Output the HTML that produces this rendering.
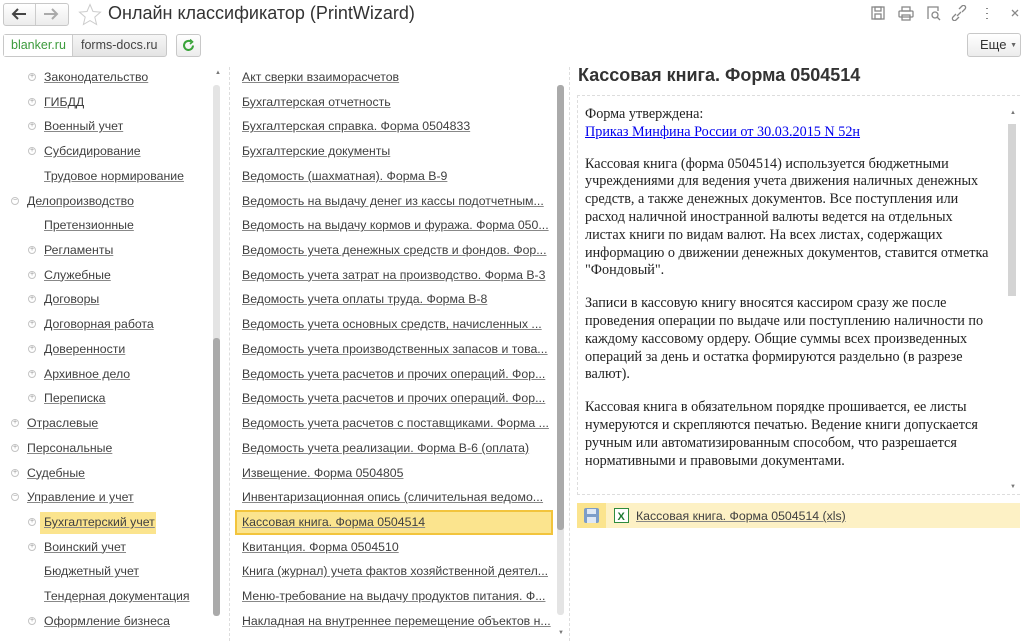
<!DOCTYPE html>
<html><head><meta charset="utf-8"><style>
*{margin:0;padding:0;box-sizing:border-box}
body{width:1024px;height:641px;background:#fff;font-family:"Liberation Sans",Arial,sans-serif;color:#333;position:relative;overflow:hidden}
.a{position:absolute}
.t{position:absolute;font-size:12.3px;white-space:nowrap;text-decoration:underline;text-decoration-color:#888;color:#404040;line-height:16px}
.pl{position:absolute;width:8px;height:8px;border:1px solid #c4c4c4;border-radius:50%;font-size:7px;line-height:6px;text-align:center;color:#999}
.btn{position:absolute;border:1px solid #c8c8c8;border-radius:3px;background:linear-gradient(#fff,#ececec)}
.p{margin-bottom:15px}
</style></head><body>
<div class="btn" style="left:3px;top:3px;width:66px;height:23px"></div>
<div class="a" style="left:35px;top:4px;width:1px;height:21px;background:#ccc"></div>
<svg class="a" style="left:11px;top:8px" width="56" height="12" fill="none" stroke-width="2"><path d="M2 6h13M7 1L2 6l5 5" stroke="#444"/><path d="M33 6h13M41 1l5 5-5 5" stroke="#aaa"/></svg>
<svg class="a" style="left:78px;top:3px" width="24" height="23"><path d="M12 1.5l3 7 7.5.6-5.7 5 1.8 7.4L12 17.6l-6.6 3.9 1.8-7.4-5.7-5 7.5-.6z" fill="none" stroke="#ccc"/></svg>
<div class="a" style="left:108px;top:3px;font-size:18px;color:#333">Онлайн классификатор (PrintWizard)</div>
<svg class="a" style="left:870px;top:5px" width="150" height="16" fill="none" stroke="#888" stroke-width="1.3">
<rect x="2" y="2" width="12" height="12"/><rect x="5" y="9" width="6" height="5"/><rect x="5" y="2" width="6" height="4"/>
<rect x="29" y="6" width="14" height="6" rx="1"/><rect x="32" y="2" width="8" height="4"/><rect x="32" y="10" width="8" height="5"/>
<path d="M58 14V2h10v4"/><circle cx="65" cy="10" r="3"/><path d="M67 12l3 3"/>
<path d="M86 9l-3 3a2 2 0 0 0 3 3l3-3M92 7l3-3a2 2 0 0 0-3-3l-3 3M87 11l4-4"/>
<path d="M117 3v1M117 8v1M117 13v1" stroke-width="2"/>
<path d="M142 5l6 6M148 5l-6 6"/>
</svg>
<div class="btn" style="left:3px;top:34px;width:164px;height:23px;background:linear-gradient(#f6f6f6,#e4e4e4)"></div>
<div class="a" style="left:4px;top:35px;width:69px;height:21px;background:#fff;border-right:1px solid #ccc"></div>
<div class="a" style="left:11px;top:38px;font-size:12.5px;color:#3c9b3c">blanker.ru</div>
<div class="a" style="left:81px;top:38px;font-size:12.5px;color:#444">forms-docs.ru</div>
<div class="btn" style="left:176px;top:34px;width:25px;height:23px"></div>
<svg class="a" style="left:182px;top:39px" width="13" height="13" fill="none" stroke="#3aa33a" stroke-width="2"><path d="M11 6.5A4.5 4.5 0 1 1 9 2.7"/><path d="M8 0.5l2.5 2.3L8 5" stroke-width="1.6"/></svg>
<div class="btn" style="left:967px;top:33px;width:54px;height:24px"></div>
<div class="a" style="left:980px;top:37px;font-size:13px;color:#333">Еще <span style="font-size:7px;color:#666;vertical-align:2px">▼</span></div>

<div class="a" style="left:213px;top:85px;width:7px;height:530px;background:#e4e4e4;border-radius:3px"></div>
<div class="a" style="left:213px;top:338px;width:7px;height:278px;background:#aaa;border-radius:3px"></div>
<div class="a" style="left:215px;top:70px;font-size:6px;color:#777">▲</div>
<div class="a" style="left:229px;top:67px;width:0;height:574px;border-left:1px dashed #ddd"></div>
<div class="a" style="left:557px;top:85px;width:7px;height:530px;background:#e4e4e4;border-radius:3px"></div>
<div class="a" style="left:557px;top:85px;width:7px;height:445px;background:#aaa;border-radius:3px"></div>
<div class="a" style="left:558px;top:630px;font-size:6px;color:#777">▼</div>
<div class="a" style="left:569px;top:67px;width:0;height:574px;border-left:1px dashed #ddd"></div>

<div class="a" style="left:40px;top:512px;width:116px;height:22px;background:#fbe48e"></div>
<div class="a" style="left:235px;top:510px;width:318px;height:25px;background:#fbe48e;border:2px solid #f2c43c"></div>

<div id="L"></div><div id="M"></div>

<div class="a" style="left:578px;top:65px;font-size:18px;font-weight:bold;color:#333">Кассовая книга. Форма 0504514</div>
<div class="a" style="left:577px;top:95px;width:443px;height:400px;border:1px dashed #ddd;border-right:none"></div>
<div class="a" style="left:1008px;top:124px;width:8px;height:172px;background:#d4d4d4"></div>
<div class="a" style="left:1010px;top:110px;font-size:6px;color:#777">▲</div>
<div class="a" style="left:1010px;top:484px;font-size:6px;color:#777">▼</div>
<div class="a" style="left:585px;top:106px;width:414px;font-family:'Liberation Serif',serif;font-size:14.2px;line-height:17.8px;color:#222">
<div>Форма утверждена:<br><span style="color:#00e;text-decoration:underline">Приказ Минфина России от 30.03.2015 N 52н</span></div><div style="height:14px"></div>
<div class="p" style="white-space:nowrap">Кассовая книга (форма 0504514) используется бюджетными<br>учреждениями для ведения учета движения наличных денежных<br>средств, а также денежных документов. Все поступления или<br>расход наличной иностранной валюты ведется на отдельных<br>листах книги по видам валют. На всех листах, содержащих<br>информацию о движении денежных документов, ставится отметка<br>"Фондовый".</div>
<div class="p">Записи в кассовую книгу вносятся кассиром сразу же после проведения операции по выдаче или поступлению наличности по каждому кассовому ордеру. Общие суммы всех произведенных операций за день и остатка формируются раздельно (в разрезе валют).</div>
<div>Кассовая книга в обязательном порядке прошивается, ее листы нумеруются и скрепляются печатью. Ведение книги допускается ручным или автоматизированным способом, что разрешается нормативными и правовыми документами.</div>
</div>
<div class="a" style="left:577px;top:503px;width:443px;height:25px;background:#fdf1c5"></div>
<div class="a" style="left:577px;top:503px;width:29px;height:25px;background:#fbe48e"></div>
<svg class="a" style="left:584px;top:508px" width="15" height="15"><rect x="0" y="0" width="15" height="15" rx="2" fill="#7d9dc8"/><rect x="3" y="1" width="9" height="5" fill="#dfe8f5"/><rect x="3" y="9" width="9" height="6" fill="#dfe8f5"/></svg>
<svg class="a" style="left:614px;top:508px" width="15" height="15"><rect x="0.5" y="0.5" width="14" height="14" fill="#fff" stroke="#2e8b3e"/><text x="3.5" y="12" font-size="11" font-weight="bold" fill="#1e7a32" font-family="Liberation Sans">X</text></svg>
<div class="t" style="left:636px;top:508px">Кассовая книга. Форма 0504514 (xls)</div>

<script>
var L=[["Законодательство",44,1],["ГИБДД",44,1],["Военный учет",44,1],["Субсидирование",44,1],["Трудовое нормирование",44,0],["Делопроизводство",27,2],["Претензионные",44,0],["Регламенты",44,1],["Служебные",44,1],["Договоры",44,1],["Договорная работа",44,1],["Доверенности",44,1],["Архивное дело",44,1],["Переписка",44,1],["Отраслевые",27,1],["Персональные",27,1],["Судебные",27,1],["Управление и учет",27,2],["Бухгалтерский учет",44,1],["Воинский учет",44,1],["Бюджетный учет",44,0],["Тендерная документация",44,0],["Оформление бизнеса",44,1]];
var M=["Акт сверки взаиморасчетов","Бухгалтерская отчетность","Бухгалтерская справка. Форма 0504833","Бухгалтерские документы","Ведомость (шахматная). Форма В-9","Ведомость на выдачу денег из кассы подотчетным...","Ведомость на выдачу кормов и фуража. Форма 050...","Ведомость учета денежных средств и фондов. Фор...","Ведомость учета затрат на производство. Форма В-3","Ведомость учета оплаты труда. Форма В-8","Ведомость учета основных средств, начисленных ...","Ведомость учета производственных запасов и това...","Ведомость учета расчетов и прочих операций. Фор...","Ведомость учета расчетов и прочих операций. Фор...","Ведомость учета расчетов с поставщиками. Форма ...","Ведомость учета реализации. Форма В-6 (оплата)","Извещение. Форма 0504805","Инвентаризационная опись (сличительная ведомо...","Кассовая книга. Форма 0504514","Квитанция. Форма 0504510","Книга (журнал) учета фактов хозяйственной деятел...","Меню-требование на выдачу продуктов питания. Ф...","Накладная на внутреннее перемещение объектов н..."];
var h="";
L.forEach(function(r,i){var y=69+i*24.72;h+='<div class="t" style="left:'+r[1]+'px;top:'+y+'px">'+r[0]+'</div>';
if(r[2])h+='<div class="pl" style="left:'+(r[1]-16)+'px;top:'+(y+4)+'px">'+(r[2]==1?'+':'−')+'</div>';});
M.forEach(function(r,i){var y=69+i*24.72;h+='<div class="t" style="left:242px;top:'+y+'px">'+r+'</div>';});
document.getElementById("L").innerHTML=h;
</script>
</body></html>
